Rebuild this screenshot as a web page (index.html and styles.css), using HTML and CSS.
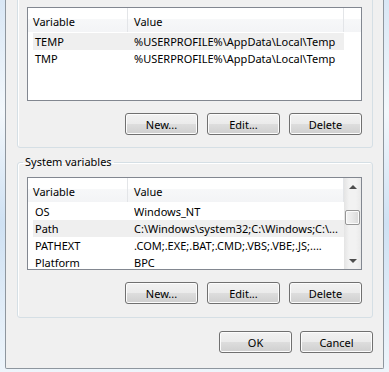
FILE: index.html
```html
<!DOCTYPE html>
<html lang="en">
<head>
    <meta charset="UTF-8">
    <meta name="viewport" content="width=device-width, initial-scale=1.0">
    <title>Environment Variables</title>
    <link rel="stylesheet" href="styles.css">
</head>
<body>
    <div class="window">
        <div class="group group-user">
            <div class="listview">
                <div class="lv-main">
                    <div class="lv-header">
                        <div class="hcol hcol-name">Variable</div>
                        <div class="hcol hcol-value">Value</div>
                        <div class="hcol hcol-fill"></div>
                    </div>
                    <div class="lv-rows">
                        <div class="lv-row selected">
                            <span class="c-name">TEMP</span>
                            <span class="c-value">%USERPROFILE%\AppData\Local\Temp</span>
                        </div>
                        <div class="lv-row">
                            <span class="c-name">TMP</span>
                            <span class="c-value">%USERPROFILE%\AppData\Local\Temp</span>
                        </div>
                    </div>
                </div>
            </div>
            <div class="btn-row">
                <button class="btn">New...</button>
                <button class="btn">Edit...</button>
                <button class="btn">Delete</button>
            </div>
        </div>

        <fieldset class="group group-system">
            <legend>System variables</legend>
            <div class="group-body">
                <div class="listview listview-scroll">
                    <div class="lv-main">
                        <div class="lv-header">
                            <div class="hcol hcol-name">Variable</div>
                            <div class="hcol hcol-value">Value</div>
                        </div>
                        <div class="lv-rows">
                            <div class="lv-row">
                                <span class="c-name">OS</span>
                                <span class="c-value">Windows_NT</span>
                            </div>
                            <div class="lv-row selected">
                                <span class="c-name">Path</span>
                                <span class="c-value">C:\Windows\system32;C:\Windows;C:\...</span>
                            </div>
                            <div class="lv-row">
                                <span class="c-name">PATHEXT</span>
                                <span class="c-value">.COM;.EXE;.BAT;.CMD;.VBS;.VBE;.JS;....</span>
                            </div>
                            <div class="lv-row">
                                <span class="c-name">Platform</span>
                                <span class="c-value">BPC</span>
                            </div>
                        </div>
                    </div>
                    <div class="scrollbar">
                        <div class="sb-btn"><span class="arrow-up"></span></div>
                        <div class="sb-track"><div class="sb-thumb"></div></div>
                        <div class="sb-btn"><span class="arrow-down"></span></div>
                    </div>
                </div>
                <div class="btn-row">
                    <button class="btn">New...</button>
                    <button class="btn">Edit...</button>
                    <button class="btn">Delete</button>
                </div>
            </div>
        </fieldset>

        <div class="dialog-buttons">
            <button class="btn">OK</button>
            <button class="btn">Cancel</button>
        </div>
    </div>
</body>
</html>
```

FILE: styles.css
```css
html, body {
    margin: 0;
    height: 100%;
    overflow: hidden;
}

body {
    font-family: "Noto Sans", "Open Sans", sans-serif;
    font-size: 11px;
    color: #000;
    background: linear-gradient(180deg, #d9e7f5 0%, #f3f8fc 30%, #cfe1f3 60%, #eef5fb 100%);
}

.window {
    width: 379px;
    margin-left: 5px;
    box-sizing: border-box;
    background-color: #f0f0f0;
    border: 1px solid #8e969e;
    border-top: none;
    border-radius: 0 0 2px 2px;
    padding: 0 10px 15px 11px;
}

.group {
    border: 1px solid #d5dfe5;
    border-radius: 3px;
    box-shadow: inset 1px 1px 0 #fff;
}

.group-user {
    margin-top: -12px;
    padding: 18px 10px 12px 9px;
}

.group-system {
    margin: 6px 0 0;
    padding: 0;
    min-width: 0;
}

.group-system legend {
    margin-left: 5px;
    padding: 0 2px;
    line-height: 16px;
}

.group-body {
    padding: 7px 10px 13px 9px;
}

/* list views */
.listview {
    display: flex;
    height: 94px;
    box-sizing: border-box;
    border: 1px solid #828790;
    background-color: #fff;
    overflow: hidden;
}

.listview-scroll {
    height: 93px;
}

.lv-main {
    flex: 1;
    min-width: 0;
}

.lv-header {
    display: flex;
    height: 24px;
    background: linear-gradient(180deg, #fff 0%, #fff 45%, #f7f8f9 46%, #f3f4f6 100%);
}

.hcol {
    box-sizing: border-box;
    padding: 6px 0 0 5px;
    line-height: 16px;
    border-right: 1px solid #e3e5e8;
}

.hcol-name {
    width: 100px;
}

.hcol-value {
    width: 216px;
    padding-left: 6px;
}

.hcol-fill {
    flex: 1;
    border-right: none;
}

.lv-rows {
    padding-top: 1px;
}

.lv-row {
    display: flex;
    width: 311px;
    height: 17px;
    margin-left: 5px;
    line-height: 17px;
    white-space: nowrap;
}

.lv-row.selected {
    background-color: #efefef;
}

.c-name {
    width: 101px;
    flex-shrink: 0;
    box-sizing: border-box;
    padding-left: 2px;
}

.c-value {
    flex: 1;
    overflow: hidden;
}

/* scroll bar */
.scrollbar {
    width: 17px;
    display: flex;
    flex-direction: column;
    background: linear-gradient(90deg, #e4e4e4 0%, #f2f2f2 30%, #f2f2f2 70%, #e9e9e9 100%);
}

.sb-btn {
    height: 17px;
    display: flex;
    align-items: center;
    justify-content: center;
}

.arrow-up, .arrow-down {
    width: 0;
    height: 0;
    border-left: 4px solid transparent;
    border-right: 4px solid transparent;
}

.arrow-up {
    border-bottom: 4px solid #4d4d4d;
}

.arrow-down {
    border-top: 4px solid #4d4d4d;
}

.sb-track {
    flex: 1;
    padding: 15px 1px 0;
}

.sb-thumb {
    height: 15px;
    box-sizing: border-box;
    border: 1px solid #979797;
    border-radius: 2px;
    background: linear-gradient(90deg, #f3f3f3 0%, #e8e8e8 50%, #d9d9d9 100%);
    box-shadow: inset 0 0 0 1px #fbfbfb;
}

/* buttons */
.btn-row {
    display: flex;
    justify-content: flex-end;
    gap: 9px;
    margin-top: 12px;
}

.btn {
    width: 73px;
    height: 22px;
    padding: 0;
    font-family: inherit;
    font-size: 11px;
    color: #000;
    border: 1px solid #707070;
    border-radius: 3px;
    background: linear-gradient(180deg, #f2f2f2 0%, #ebebeb 48%, #dddddd 52%, #cfcfcf 100%);
    box-shadow: inset 0 0 0 1px #fcfcfc;
}

.dialog-buttons {
    display: flex;
    justify-content: flex-end;
    gap: 8px;
    margin-top: 13px;
}
```
